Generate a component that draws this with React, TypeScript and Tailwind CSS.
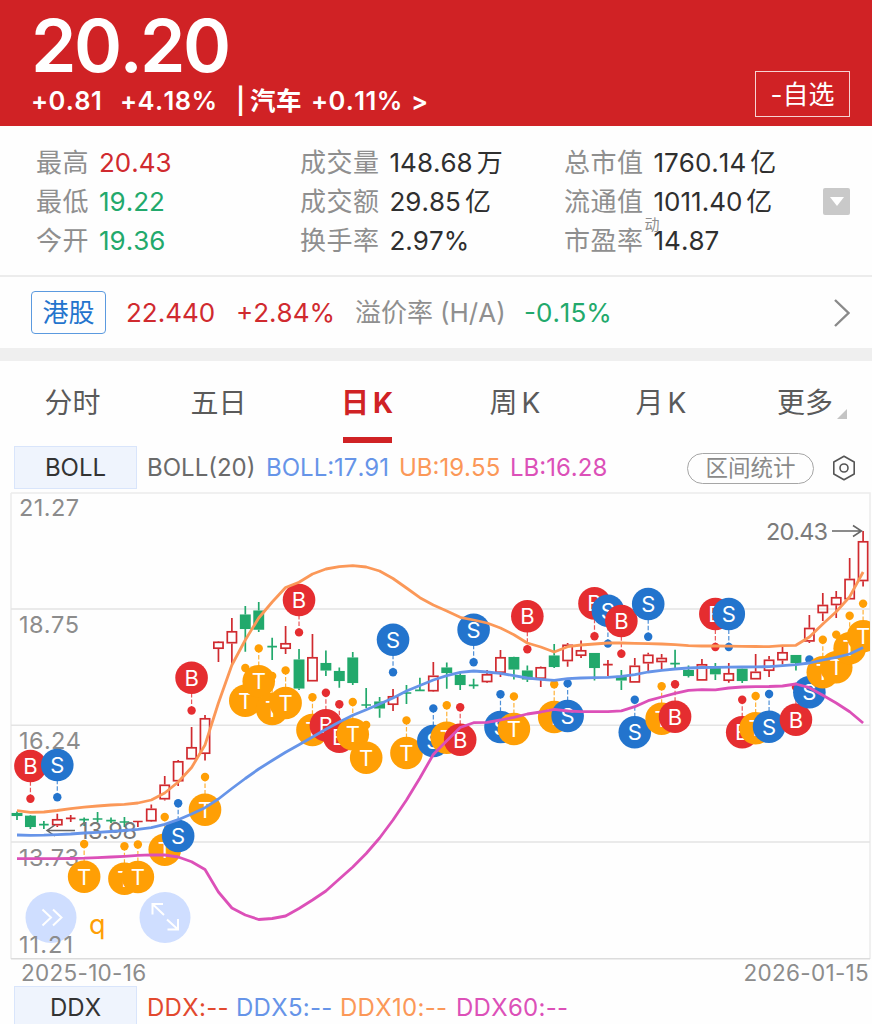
import clsx from "clsx";

type Quote = { label: string; value: string; unit?: string; sup?: string; tone?: "up" | "down" };
type Side = "B" | "S" | "T";

const RED = "#d02a2f";
const GREEN = "#22a96c";
const GREY = "#8c8c8c";

const MARKER_COLORS: Record<Side, string> = {
  B: "#e52d30",
  S: "#2374cd",
  T: "#ff9f05",
};

const quoteColumns: Quote[][] = [
  [
    { label: "最高", value: "20.43", tone: "up" },
    { label: "最低", value: "19.22", tone: "down" },
    { label: "今开", value: "19.36", tone: "down" },
  ],
  [
    { label: "成交量", value: "148.68", unit: "万" },
    { label: "成交额", value: "29.85", unit: "亿" },
    { label: "换手率", value: "2.97%" },
  ],
  [
    { label: "总市值", value: "1760.14", unit: "亿" },
    { label: "流通值", value: "1011.40", unit: "亿" },
    { label: "市盈率", value: "14.87", sup: "动" },
  ],
];

// direction, high, body top, body bottom, low
type Candle = ["r" | "g", number, number, number, number];

const candles: Candle[] = [
  ["g", 811.5, 813, 816, 820],
  ["g", 815, 815.7, 827, 829],
  ["g", 821, 824.7, 824.7, 829],
  ["r", 813.7, 819, 825.5, 827],
  ["r", 815, 818.3, 818.3, 822],
  ["g", 817.5, 819.7, 819.7, 826],
  ["g", 812, 819, 819, 822.5],
  ["g", 817.5, 820.7, 820.7, 823],
  ["g", 817, 822, 822, 827],
  ["r", 821, 821.5, 821.5, 827],
  ["r", 804.5, 808.5, 821.5, 822],
  ["r", 776, 784.5, 799.5, 800.5],
  ["r", 760, 761, 781.5, 786],
  ["r", 727, 747, 759.5, 759.5],
  ["r", 715, 718, 754, 760.5],
  ["r", 641, 641.5, 649, 662],
  ["r", 618, 631, 643.5, 666],
  ["g", 606, 614.5, 629, 651.7],
  ["g", 602, 610.5, 629.7, 632],
  ["g", 637.7, 646.7, 646.7, 660],
  ["r", 626, 643, 649, 654],
  ["g", 649, 659.5, 688.5, 690],
  ["r", 634, 657, 681.5, 681.5],
  ["g", 650.5, 663, 670.5, 676],
  ["g", 667.5, 671, 681, 687.7],
  ["g", 652, 657.5, 683, 685],
  ["g", 688, 705, 705, 708],
  ["g", 697, 701.5, 708.5, 717.7],
  ["r", 689, 696, 705, 711],
  ["g", 685, 693, 693, 704],
  ["g", 677.7, 690.3, 690.3, 691],
  ["r", 662, 675.5, 691.5, 692],
  ["g", 662.5, 667.5, 673, 688.7],
  ["g", 672, 675, 685, 690],
  ["g", 678.7, 685.3, 685.3, 688.7],
  ["r", 670, 674, 682.3, 683],
  ["r", 650, 657, 673, 677],
  ["g", 656.7, 657, 669.5, 679.5],
  ["g", 665.5, 670.5, 679.5, 682],
  ["r", 666.5, 667, 679, 687],
  ["g", 644, 655.5, 667, 668],
  ["r", 643, 644.5, 661.3, 666.7],
  ["r", 640.5, 650, 656, 658],
  ["g", 653, 653, 668, 680.5],
  ["r", 660, 664.7, 664.7, 676],
  ["g", 670, 676, 680.5, 690],
  ["r", 658, 665.5, 682.7, 682.7],
  ["r", 652.7, 654.5, 663.5, 671.5],
  ["r", 654, 657.7, 662.3, 669],
  ["g", 649.7, 663.7, 663.7, 668],
  ["g", 665.5, 670, 676, 677.5],
  ["r", 659, 664, 680.7, 680.7],
  ["g", 663, 666.3, 674.3, 680],
  ["r", 663, 673, 681, 682.7],
  ["g", 668.5, 668.7, 681, 683],
  ["r", 654, 671.5, 679.5, 679.5],
  ["r", 656, 659.5, 671, 677],
  ["r", 646.7, 652, 660.5, 664.5],
  ["g", 655, 655, 663, 670.5],
  ["r", 615, 627.7, 641.7, 643],
  ["r", 593, 604.7, 613.3, 621],
  ["r", 591, 597, 605.3, 618],
  ["r", 558, 578.7, 599.5, 599.5],
  ["r", 531, 541, 581.3, 586.5],
];

// candle index, side, disc y, anchor dot y
const markers: [number, Side, number, number][] = [
  [1, "B", 766, 798.7],
  [3, "S", 765, 797.3],
  [5, "T", 876.7, 844],
  [8, "T", 878.7, 846.3],
  [9, "T", 877, 844.5],
  [11, "T", 849.7, 817],
  [12, "S", 836, 803.2],
  [13, "B", 677.7, 710.5],
  [14, "T", 809.7, 777],
  [17, "T", 700.7, 668],
  [18, "T", 681.2, 648.4],
  [19, "T", 709, 676],
  [20, "T", 703, 670.4],
  [21, "B", 600, 632.4],
  [22, "T", 730, 697.3],
  [23, "B", 725.3, 692.7],
  [24, "B", 736.7, 704.2],
  [25, "T", 734.3, 702],
  [26, "T", 757.7, 725],
  [28, "S", 639.7, 672.3],
  [29, "T", 753, 720.4],
  [31, "S", 741, 708.4],
  [32, "T", 737.7, 705.2],
  [33, "B", 739.8, 707.2],
  [34, "S", 629.7, 662.2],
  [36, "S", 727, 694.2],
  [37, "T", 729, 696.4],
  [38, "B", 616.3, 649.3],
  [40, "T", 717, 684.3],
  [41, "S", 716, 683.4],
  [43, "B", 603.4, 636.2],
  [44, "S", 610.7, 643.6],
  [45, "B", 621, 653.8],
  [46, "S", 732.3, 699.7],
  [47, "S", 604, 636.7],
  [48, "T", 718.7, 686.2],
  [49, "B", 716.7, 684.3],
  [52, "B", 614, 647],
  [53, "S", 614, 647],
  [54, "B", 732.3, 699.8],
  [55, "T", 728.3, 696],
  [56, "S", 726.7, 694],
  [58, "B", 719.8, 687],
  [59, "S", 692.3, 659.5],
  [60, "T", 672.3, 639.7],
  [61, "T", 667.3, 634.6],
  [62, "T", 648.3, 615.8],
  [63, "T", 636.3, 603.6],
];

const upper = [
  810.7, 812.3, 812, 810.5, 808.6, 807.2, 806, 805, 804.3, 803, 800, 793, 782, 767.5, 745,
  703, 665, 640, 618, 602, 587.5, 582.3, 574, 569, 566.6, 565.7, 567, 571, 578.5, 588,
  597.7, 605, 611, 617.3, 620, 623, 628, 634.7, 643, 647, 652, 646.7, 645, 644, 643, 643,
  643.3, 643.6, 644, 644.7, 645.7, 646, 646, 646.2, 646.4, 646.5, 646.7, 645.7, 645.3,
  637, 624, 611.7, 596.7, 572,
];

const middle = [
  835, 835.3, 835.2, 834.6, 834, 833, 832.3, 831.5, 830.5, 829.3, 827.7, 824.3, 819.7, 814,
  807.7, 799, 788.5, 778.5, 769, 760.5, 752.3, 744.7, 737, 729.3, 722, 715.3, 709.8, 704,
  698, 691, 685.5, 680, 675.7, 672.3, 671, 672, 673.3, 675.7, 678, 679.3, 680.3, 678.7,
  678, 677.7, 677.3, 676.3, 674.7, 672, 670.3, 669, 668, 667.5, 667.3, 667.2, 667, 666.8,
  666.7, 665.7, 664.7, 663, 660, 657.3, 654, 647.5,
];

const lower = [
  858.7, 858.7, 858.7, 858.6, 858.5, 858.2, 857.6, 857, 856.3, 855.4, 854.8, 855, 857,
  861.7, 869.5, 892, 908, 915, 919.5, 918.5, 916, 908.5, 900, 891, 879, 867, 853.5, 838,
  820, 800, 778, 754.5, 740.7, 727.5, 722.7, 722.3, 720, 717.3, 714, 712, 709.3, 711,
  711.7, 711.7, 711.7, 710.8, 706.7, 700.7, 697, 693.3, 690.3, 689.7, 689.8, 688, 687,
  686.7, 686.5, 686, 684, 687.7, 695.3, 703, 711.7, 723,
];

const xAt = (i: number) => 17 + i * 13.43;
const toPoints = (ys: number[]) => ys.map((y, i) => `${xAt(i).toFixed(1)},${y}`).join(" ");

function CandleStick({ index, data }: { index: number; data: Candle }) {
  const [dir, high, top, bottom, low] = data;
  const x = xAt(index);
  const color = dir === "r" ? RED : GREEN;

  if (bottom - top < 1) {
    return (
      <path
        d={`M${x} ${high}V${low}M${x - 4.8} ${top}H${x + 4.8}`}
        stroke={color}
        strokeWidth={1.7}
      />
    );
  }
  return (
    <g stroke={color} strokeWidth={1.7}>
      <path d={`M${x} ${high}V${top}M${x} ${bottom}V${low}`} />
      <rect
        x={x - 4.6}
        y={top + 0.8}
        width={9.2}
        height={Math.max(bottom - top - 1.6, 1)}
        fill={dir === "g" ? color : "none"}
      />
    </g>
  );
}

function Marker({ index, side, y, dot }: { index: number; side: Side; y: number; dot: number }) {
  const x = xAt(index);
  const color = MARKER_COLORS[side];
  return (
    <g>
      <path
        d={`M${x} ${dot}V${y}`}
        stroke={color}
        strokeWidth={1.2}
        strokeDasharray="4.5 2"
        opacity={0.8}
      />
      <circle cx={x} cy={dot} r={4.2} fill={color} />
      <circle cx={x} cy={y} r={16.3} fill={color} />
      <text x={x} y={y + 8} textAnchor="middle" fontSize={22} fill="#fff">
        {side}
      </text>
    </g>
  );
}

function KLineChart() {
  return (
    <svg
      viewBox="0 492 872 468"
      className="block h-[468px] w-[872px] shrink-0 font-[Inter,sans-serif]"
      fill="none"
    >
      <defs>
        <clipPath id="plot">
          <rect x="11" y="492" width="859" height="468" />
        </clipPath>
      </defs>
      <g stroke="#e4e4e4" strokeWidth={1.5}>
        <path d="M11 493H870V959M11 493V959" stroke="#ececec" />
        <path d="M11 609H870M11 725.3H870M11 842H870" />
        <path d="M11 958.8H870" stroke="#dcdcdc" />
      </g>

      <g clipPath="url(#plot)">
        {candles.map((c, i) => (
          <CandleStick key={i} index={i} data={c} />
        ))}
      </g>

      <g fontSize={23.5} fill={GREY}>
        <text x="19" y="516" textLength="60">21.27</text>
        <text x="19" y="632.5" textLength="60">18.75</text>
        <text x="19" y="749" textLength="62">16.24</text>
        <text x="19" y="866" textLength="60">13.73</text>
        <text x="766" y="540" textLength="62" fill="#7b7b7b">20.43</text>
        <text x="79" y="839" textLength="58" fill="#777">13.98</text>
      </g>
      <g stroke="#666" strokeWidth={1.5}>
        <path d="M832 531H861M853 525.5L861.5 531L853 536.5" />
        <path d="M75 830.5H47M55 825L47 830.5L55 836" />
      </g>

      <g clipPath="url(#plot)">
        {markers.map(([i, side, y, dot]) => (
          <Marker key={i} index={i} side={side} y={y} dot={dot} />
        ))}
      </g>

      <g strokeWidth={2.8} strokeLinejoin="round">
        <polyline points={toPoints(upper)} stroke="#fb9858" />
        <polyline points={toPoints(middle)} stroke="#6694e8" />
        <polyline points={toPoints(lower)} stroke="#dc50b8" />
      </g>

      <circle cx="51" cy="917.5" r="25.5" fill="#cfdeff" />
      <circle cx="165" cy="917.5" r="25.5" fill="#cfdeff" />
      <g stroke="#fff" strokeWidth={2}>
        <path d="M42.5 909.5L51 917.5L42.5 925.5M53 909.5L61.5 917.5L53 925.5" />
        <path d="M164 915L152.5 904M152.5 914.5V904H163M167 919.5L178 929.5M178 919V929.5H167.5" />
      </g>
      <text x="19" y="953" fontSize={23.5} textLength="54" fill={GREY}>11.21</text>
      <text x="89" y="934" fontSize={27} fill="#ff9f05">q</text>
    </svg>
  );
}

function Header() {
  return (
    <header className="flex h-[126px] shrink-0 justify-between bg-[#d02225] pr-[22px] pl-[31px] text-white">
      <div>
        <div className="mt-[9px] h-[74px] text-[73px] leading-[74px] font-semibold tracking-[-2.6px]">
          20.20
        </div>
        <div className="mt-[2px] flex h-8 items-center text-[25.5px] font-semibold tracking-[0.4px] whitespace-pre">
          <span className="w-[89px]">+0.81</span>
          <span className="w-[116px]">+4.18%</span>
          <span className="w-[14px]">|</span>
          <span className="w-[61px]">汽车</span>
          <span className="w-[100px]">+0.11%</span>
          <span>&gt;</span>
        </div>
      </div>
      <button className="mt-[71px] h-[46px] w-[95px] border-[1.5px] border-white/80 text-[26px]">
        -自选
      </button>
    </header>
  );
}

function QuoteRow({ label, value, unit, sup, tone }: Quote) {
  return (
    <div className="flex h-[39px] items-center">
      <span className="tracking-[0.5px] text-[#8f8f8f]">{label}</span>
      <span
        className={clsx(
          "relative ml-[10px]",
          tone === "up" && "text-[#d02a2f]",
          tone === "down" && "text-[#22a96c]",
          !tone && "text-[#2f2f2f]"
        )}
      >
        {sup && (
          <sup className="absolute top-[-6px] left-[-9px] text-[15px] leading-[20px] text-[#8f8f8f]">{sup}</sup>
        )}
        {value}
      </span>
      {unit && <span className="ml-[4px] text-[#2f2f2f]">{unit}</span>}
    </div>
  );
}

function Quotes() {
  return (
    <section className="flex h-[151px] shrink-0 border-b-2 border-[#ececec] pt-[17px] pl-[36px] text-[26px]">
      {quoteColumns.map((column) => (
        <div key={column[0].label} className="w-[264px]">
          {column.map((q) => (
            <QuoteRow key={q.label} {...q} />
          ))}
        </div>
      ))}
      <div className="mt-[45px] -ml-[5px] flex size-[27px] shrink-0 items-center justify-center rounded-[2px] bg-[#c9c9c9]">
        <svg viewBox="0 0 14 9" className="w-[14px]">
          <path d="M0 0H14L7 9Z" fill="#fff" />
        </svg>
      </div>
    </section>
  );
}

function HongKongBar() {
  return (
    <section className="flex h-[71px] shrink-0 items-center pl-[31px] text-[26px] whitespace-nowrap">
      <span className="flex h-[43px] w-[75px] items-center justify-center rounded-[4px] border-[1.5px] border-[#5b9adf] text-[#2374cd]">
        港股
      </span>
      <span className="ml-[20px] w-[110px] text-[#d02a2f]">22.440</span>
      <span className="w-[119px] text-[#d02a2f]">+2.84%</span>
      <span className="text-[#8f8f8f]">溢价率</span>
      <span className="ml-[7px] w-[84px] text-[#8f8f8f]">(H/A)</span>
      <span className="text-[#22a96c]">-0.15%</span>
      <svg viewBox="0 0 16 28" className="mr-[22px] ml-auto w-4" fill="none">
        <path d="M1 1L14.5 14L1 27" stroke="#8a8a8a" strokeWidth={2.4} />
      </svg>
    </section>
  );
}

const tabs = [
  { name: "分时", width: "w-[145px]" },
  { name: "五日", width: "w-[147px]" },
  { name: "日K", width: "w-[150px]", active: true },
  { name: "周K", width: "w-[146px]" },
  { name: "月K", width: "w-[146px]" },
  { name: "更多", width: "w-[142px]", more: true },
];

function PeriodTabs() {
  return (
    <nav className="flex h-[85px] shrink-0 text-[28px] text-[#5a5a5a]">
      {tabs.map(({ name, width, active, more }) => (
        <div
          key={name}
          className={clsx("flex shrink-0 flex-col items-center", width, active && "font-bold text-[#d02225]")}
        >
          <span className="relative mt-[21px] h-[42px] leading-[42px]">
            {name.endsWith("K") ? (
              <>
                {name[0]}
                <span className="ml-[4px]">K</span>
              </>
            ) : (
              name
            )}
            {more && (
              <svg viewBox="0 0 10 10" className="absolute right-[-14px] bottom-[5px] w-[10px]">
                <path d="M10 0V10H0Z" fill="#c4c4c4" />
              </svg>
            )}
          </span>
          {active && <i className="mt-[13px] h-[6px] w-[49px] bg-[#d02225]" />}
        </div>
      ))}
    </nav>
  );
}

function IndicatorName({ children }: { children: string }) {
  return (
    <span className="flex h-[43px] w-[123px] shrink-0 items-center justify-center border-[1.5px] border-[#d9e5fb] bg-[#eff4fd] text-[#333]">
      {children}
    </span>
  );
}

function BollBar() {
  return (
    <div className="flex h-[46px] shrink-0 items-start pl-[14px] text-[24px] whitespace-nowrap">
      <IndicatorName>BOLL</IndicatorName>
      <div className="ml-[10px] flex h-[44px] items-center">
        <span className="w-[119px] text-[#6a6a6a]">BOLL(20)</span>
        <span className="w-[133px] text-[#6694e8]">BOLL:17.91</span>
        <span className="w-[111px] text-[#fb9858]">UB:19.55</span>
        <span className="w-[177px] text-[#dc50b8]">LB:16.28</span>
        <span className="flex h-[31px] w-[127px] items-center justify-center rounded-full border-[1.5px] border-[#a6a6a6] text-[22.5px] text-[#8a8a8a]">
          区间统计
        </span>
        <svg viewBox="0 0 24 26" className="ml-[18px] w-6" fill="none" stroke="#555" strokeWidth={1.6}>
          <path d="M12 1.2L22.2 7V19L12 24.8L1.8 19V7Z" strokeLinejoin="round" />
          <circle cx="12" cy="13" r="4" />
        </svg>
      </div>
    </div>
  );
}

function DdxBar() {
  return (
    <div className="flex shrink-0 pl-[14px] text-[24px] whitespace-nowrap">
      <IndicatorName>DDX</IndicatorName>
      <div className="ml-[10px] flex h-[44px] items-center tracking-[0.3px]">
        <span className="w-[89px] text-[#e2492f]">DDX:--</span>
        <span className="w-[104px] text-[#6694e8]">DDX5:--</span>
        <span className="w-[116px] text-[#fb9858]">DDX10:--</span>
        <span className="text-[#dc50b8]">DDX60:--</span>
      </div>
    </div>
  );
}

export default function App() {
  return (
    <main className="flex h-[1024px] w-[872px] flex-col overflow-hidden bg-[#fefefe] font-[Inter,'Noto_Sans_CJK_SC',sans-serif] [font-kerning:none]">
      <Header />
      <Quotes />
      <HongKongBar />
      <div className="h-[13px] shrink-0 bg-[#efefef]" />
      <PeriodTabs />
      <BollBar />
      <KLineChart />
      <div className="flex h-[26px] shrink-0 items-center justify-between pr-[3px] pl-[21px] text-[22.5px] tracking-[0.3px] text-[#8c8c8c]">
        <span>2025-10-16</span>
        <span>2026-01-15</span>
      </div>
      <DdxBar />
    </main>
  );
}
